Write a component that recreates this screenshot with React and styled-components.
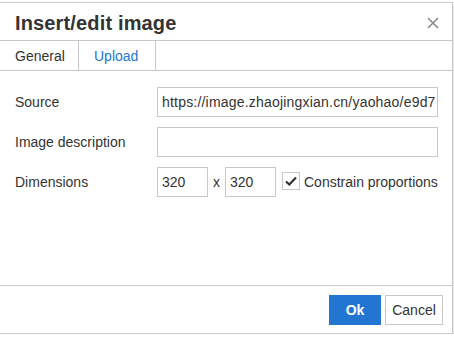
import React from 'react'
import styled, { createGlobalStyle } from 'styled-components'

const GlobalStyle = createGlobalStyle`
  * { box-sizing: border-box; }
  body {
    margin: 0;
    background: #fff;
    font-family: "Liberation Sans", Arial, sans-serif;
    color: #333;
  }
`

const Dialog = styled.div`
  width: 454px;
  height: 332px;
  margin: 2px 0 0 -1px;
  background: #fff;
  border: 1px solid #c8c8c8;
  box-shadow: 0 3px 3px rgba(0, 0, 0, 0.25);
  display: flex;
  flex-direction: column;
`

const Header = styled.div`
  height: 38px;
  border-bottom: 1px solid #c8c8c8;
  display: flex;
  align-items: center;
  justify-content: space-between;
  padding: 0 12px 0 15px;
`

const Title = styled.h1`
  margin: 0;
  font-size: 20px;
  font-weight: bold;
  color: #333;
  line-height: 1;
  padding-top: 2px;
  letter-spacing: 0.15px;
`

const Close = styled.button`
  border: none;
  background: none;
  padding: 0;
  width: 14px;
  height: 14px;
  display: flex;
  align-items: center;
  justify-content: center;
  margin-top: 2px;
`

const Tabs = styled.div`
  height: 30px;
  border-bottom: 1px solid #c8c8c8;
  display: flex;
`

const Tab = styled.div`
  width: ${p => p.width}px;
  border-right: 1px solid #c8c8c8;
  font-size: 14px;
  display: flex;
  align-items: center;
  padding-left: ${p => p.pad}px;
  color: ${p => (p.active ? '#333' : '#2276d2')};
  background: #fff;
`

const Form = styled.div`
  flex: 1;
  padding: 16px 0 0 15px;
  display: flex;
  flex-direction: column;
  gap: 10px;
`

const Row = styled.div`
  height: 30px;
  display: flex;
  align-items: center;
`

const Label = styled.label`
  width: 142px;
  font-size: 14px;
  color: #333;
`

const Input = styled.div`
  width: ${p => p.width}px;
  height: 30px;
  border: 1px solid #c8c8c8;
  font-size: 14px;
  color: #333;
  padding: 0 4px;
  display: flex;
  align-items: center;
  white-space: nowrap;
  overflow: hidden;
  letter-spacing: ${p => p.spacing || 0}px;
`

const Times = styled.span`
  font-size: 14px;
  width: 17px;
  text-align: center;
`

const Check = styled.span`
  width: 18px;
  height: 18px;
  border: 1px solid #c8c8c8;
  margin: -2px 4px 0 6px;
  display: flex;
  align-items: center;
  justify-content: center;
`

const CheckLabel = styled.span`
  font-size: 14px;
  color: #333;
`

const Footer = styled.div`
  height: 48px;
  border-top: 1px solid #c8c8c8;
  display: flex;
  justify-content: flex-end;
  align-items: center;
  gap: 4px;
  padding: 0 9px 0 0;
`

const Button = styled.button`
  height: 30px;
  width: ${p => p.width}px;
  font-family: "Liberation Sans", Arial, sans-serif;
  font-size: 14px;
  border: 1px solid ${p => (p.primary ? '#2276d2' : '#c8c8c8')};
  background: ${p => (p.primary ? '#2276d2' : '#fff')};
  color: ${p => (p.primary ? '#fff' : '#333')};
  font-weight: ${p => (p.primary ? 'bold' : 'normal')};
  padding: 0;
`

export default function App() {
  return (
    <>
      <GlobalStyle />
      <Dialog>
        <Header>
          <Title>Insert/edit image</Title>
          <Close aria-label="Close">
            <svg width="12" height="12" viewBox="0 0 12 12">
              <path d="M1 1 L11 11 M11 1 L1 11" stroke="#8a8a8a" strokeWidth="1.6" fill="none" />
            </svg>
          </Close>
        </Header>
        <Tabs>
          <Tab active width={79} pad={15}>General</Tab>
          <Tab width={77} pad={15}>Upload</Tab>
        </Tabs>
        <Form>
          <Row>
            <Label>Source</Label>
            <Input width={281} spacing={0.2}>https://image.zhaojingxian.cn/yaohao/e9d7</Input>
          </Row>
          <Row>
            <Label>Image description</Label>
            <Input width={281} />
          </Row>
          <Row>
            <Label>Dimensions</Label>
            <Input width={51}>320</Input>
            <Times>x</Times>
            <Input width={51}>320</Input>
            <Check>
              <svg width="12" height="10" viewBox="0 0 12 10">
                <path d="M1 5.5 L4.3 8.5 L11 1.5" stroke="#333" strokeWidth="2.2" fill="none" />
              </svg>
            </Check>
            <CheckLabel>Constrain proportions</CheckLabel>
          </Row>
        </Form>
        <Footer>
          <Button primary width={52}>Ok</Button>
          <Button width={58}>Cancel</Button>
        </Footer>
      </Dialog>
    </>
  )
}
